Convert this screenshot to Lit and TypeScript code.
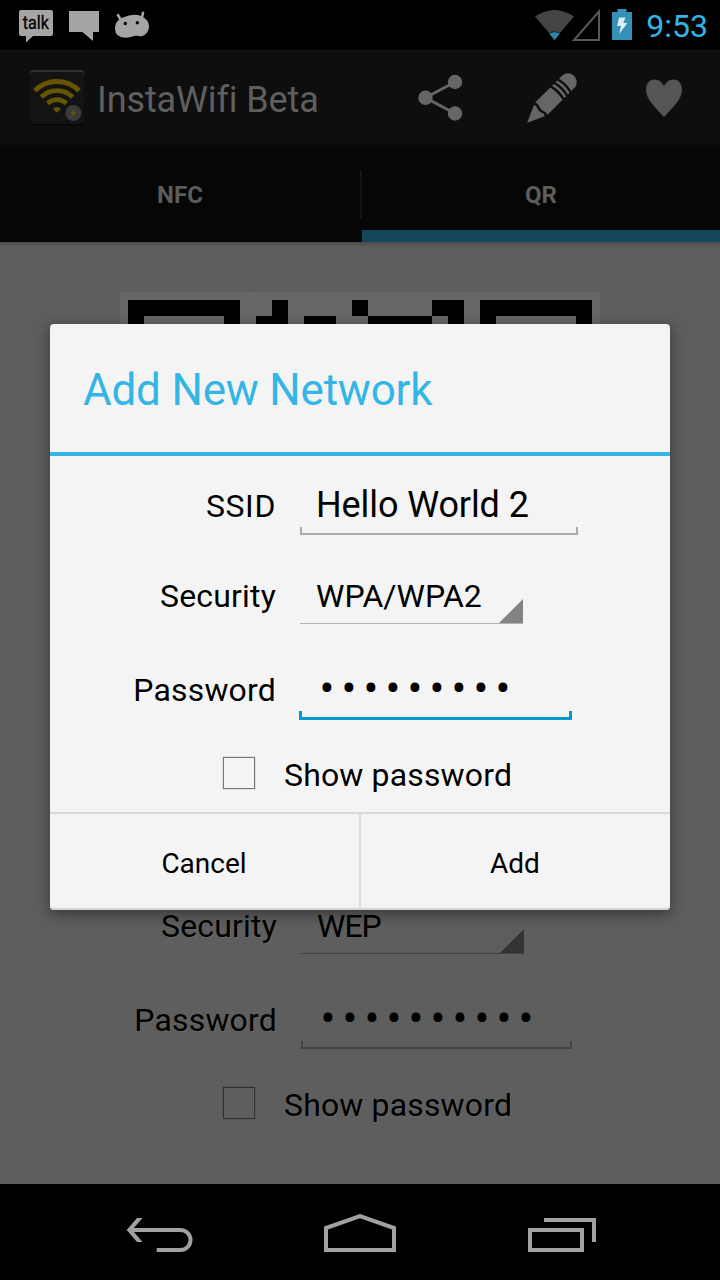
import { LitElement, html, svg, css, nothing } from "lit";
import { customElement, property } from "lit/decorators.js";
import { classMap } from "lit/directives/class-map.js";

@customElement("status-bar")
class StatusBar extends LitElement {
  static styles = css`
    :host { display: flex; height: 50px; background: #000; justify-content: space-between; }
    .clock { font-size: 32px; line-height: 52px; color: #33b5e5; padding-right: 12px; }
    .right { display: flex; }
    .talk { font: 400 17.500px Roboto, sans-serif; }
    svg { display: block; }
  `;
  render() {
    return html`
      <svg width="160" height="50" viewBox="0 0 160 50">
        <path fill="#a5a5a5" d="M21 10h30q2 0 2 2v22q0 2-2 2H33l-7 6.500v-6.500h-5q-2 0-2-2V12q0-2 2-2z"/>
        <text class="talk" x="22.800" y="29" textLength="26.200" lengthAdjust="spacingAndGlyphs" fill="#000" stroke="#000" stroke-width=".3">talk</text>
        <path fill="#a5a5a5" d="M69 11h30v21h-6v9l-10.500-9H69z"/>
        <path fill="#a5a5a5" d="M123 17.500Q133 13 141 16Q149 19.500 149 27Q148.500 34.500 141 36.500Q136 34.800 131 37Q115.500 40 115 29Q115 22 119.500 19.500z"/>
        <path d="M118 15.200l3.200 5.300M143 12.800l-1.200 5.500" stroke="#a5a5a5" stroke-width="2.600" stroke-linecap="round"/>
        <circle cx="125.300" cy="23.500" r="1.700" fill="#000"/><circle cx="137.300" cy="22.700" r="1.700" fill="#000"/>
        <path d="M129.300 28v1M133.500 28v1M129.500 31.500v1M133.500 31.500v1" stroke="#888" stroke-width=".7"/>
      </svg>
      <div class="right">
        <svg width="112" height="50" viewBox="534 0 112 50">
          <path fill="#444" d="M535 16.500Q554.500 3.500 574 16.500L559.500 33.500Q554.500 30 549.500 33.500z"/>
          <path fill="#2c87ab" stroke="#000" stroke-width=".6" d="M548.800 33.600Q554.500 30 560.200 33.600L554.500 40.600z"/>
          <path fill="none" stroke="#585858" stroke-width="2" d="M574 40H599V11.500z"/>
          <path fill="#3590b5" d="M612 12h5.500V9h9v3h5.500v28h-20z"/>
          <path fill="#dcecf3" d="M619 17.500h6.500l-2.200 5.500h4.200l-8.500 11 2-8h-3.800z"/>
        </svg>
        <span class="clock">9:53</span>
      </div>`;
  }
}

@customElement("action-bar")
class ActionBar extends LitElement {
  static styles = css`
    :host { display: flex; height: 97px; box-sizing: border-box; background: #0e0e0e; border-top: 1px solid #161616; border-bottom: 4px solid #0b0b0b; }
    .logo { padding: 19px 0 0 30px; }
    .title { flex: 1; padding-left: 13px; font-size: 36px; line-height: 99px; letter-spacing: -.12px; color: #5f5f5f; white-space: nowrap; }
    .actions { padding-top: 19px; }
    svg { display: block; }
  `;
  render() {
    return html`
      <svg class="logo" width="54" height="56" viewBox="30 70 54 56">
        <rect x="30" y="71" width="54" height="54.500" rx="3" fill="#060606"/>
        <rect x="30" y="70" width="54" height="30" rx="3" fill="#303030"/>
        <rect x="30" y="72" width="54" height="52" rx="3" fill="#131313"/>
        <g fill="none" stroke="#665600" stroke-width="4.800">
          <path d="M34.900 90.700A31.200 31.200 0 0 1 79.100 90.700"/>
          <path d="M41.300 97.100A22.200 22.200 0 0 1 72.700 97.100"/>
          <path d="M47.700 103.500A13.200 13.200 0 0 1 66.300 103.500"/>
        </g>
        <path fill="#665600" d="M53 108.800Q57 105.200 61 108.800L57 112.800z"/>
        <circle cx="73.400" cy="113" r="8" fill="#3a3a3a"/>
        <path fill="#665600" d="M75.500 107.500l-5.200 6h2.500l-1.800 5 5.300-6.500h-2.700z"/>
      </svg>
      <span class="title">InstaWifi Beta</span>
      <svg class="actions" width="304" height="56" viewBox="416 70 304 56">
        <path d="M455 82L425.500 97.800L455 113.500" fill="none" stroke="#666" stroke-width="3"/>
        <g fill="#666"><circle cx="455" cy="82" r="7.200"/><circle cx="425.500" cy="97.800" r="7.200"/><circle cx="455" cy="113.500" r="7.200"/></g>
        <g transform="translate(527.200 122.800) rotate(-45) scale(.3333)" fill="#666">
          <path d="M0 0L51-23Q57-18 52-9Q49 0 52 9Q57 18 51 23z"/>
          <path d="M60-26H124Q130 0 124 26H60Q64 16 59 9Q56 0 60-8Q65-17 60-26z"/>
          <path d="M131-26h8q7 26 0 52h-8q7-26 0-52zM146-26h8q7 26 0 52h-8q7-26 0-52z"/>
          <path d="M161-26H178Q188-24 194-16Q199-8 199 0Q199 8 194 16Q188 24 178 26H161Q168 0 161-26z"/>
        </g>
        <path fill="#555" d="M664 86.500C660.500 77 646 76.500 646 90C646 100 657 109 664 117C671 109 682 100 682 90C682 76.500 667.500 77 664 86.500z"/>
      </svg>`;
  }
}

@customElement("tab-strip")
class TabStrip extends LitElement {
  static styles = css`
    :host { display: grid; grid-template: 95px / 360px 2px 358px; height: 95px; background: #060606; font-size: 24px; font-weight: 700; color: #5c5c5c; text-align: center; line-height: 97px; }
    .divider { background: #141414; margin: 23px 0 24px; }
    .selected { box-sizing: border-box; height: 95px; border-bottom: 12px solid #14475c; }
  `;
  render() {
    return html`<span>NFC</span><span class="divider"></span><span class="selected">QR</span>`;
  }
}

@customElement("network-form")
class NetworkForm extends LitElement {
  @property() ssid = "";
  @property() security = "";
  @property({ type: Number }) dots = 0;
  @property({ type: Boolean, reflect: true }) dimmed = false;

  static styles = css`
    :host { display: block; color: #000; font-size: 32px; --line: #ababab; --under: #b4b4b4; --tri: #838383; --box: #777; --glow: #fff; }
    :host([dimmed]) { --line: #434343; --under: #424242; --tri: #343434; --box: #303030; --glow: #686868; }
    .row { display: grid; grid-template-columns: 226px 1fr; column-gap: 24px; align-items: start; }
    :host([dimmed]) .row { grid-template-columns: 227px 1fr; }
    .label { text-align: right; letter-spacing: .18px; text-shadow: 1px 1px 0 var(--glow); }
    .ssid { height: 100px; line-height: 100px; }
    .ssid .label { letter-spacing: .6px; }
    .security { height: 80px; line-height: 80px; }
    .password { height: 108px; line-height: 108px; }
    .field {
      --w: 2px; --h: 8px; --c: var(--line);
      box-sizing: border-box; padding-left: 16px; width: 278px; height: 60px; margin-top: 19px;
      font-size: 36px; line-height: 60px; letter-spacing: -.1px; white-space: nowrap;
      background:
        linear-gradient(var(--c), var(--c)) left bottom / var(--w) var(--h) no-repeat,
        linear-gradient(var(--c), var(--c)) right bottom / var(--w) var(--h) no-repeat,
        linear-gradient(var(--c), var(--c)) left bottom / 100% var(--w) no-repeat;
    }
    .secret { height: 61px; width: 271px; margin-top: 22px; font-size: 44px; line-height: 62px; letter-spacing: 0; }
    .focused { --w: 3px; --h: 9px; --c: #0099cc; height: 62px; width: 273px; margin-left: -1px; padding-left: 17px; }
    .dot { display: inline-block; width: 22px; text-align: center; }
    .spinner { box-sizing: border-box; display: flex; justify-content: space-between; align-items: flex-end; width: 223px; height: 56px; margin-top: 12px; padding-left: 16px; border-bottom: 1px solid var(--under); line-height: 54px; }
    :host([dimmed]) .spinner { letter-spacing: -1px; }
    .tri { width: 24px; height: 24px; background: var(--tri); clip-path: polygon(100% 0, 100% 100%, 0 100%); }
    .show { display: flex; height: 62px; padding-left: 173px; line-height: 62px; letter-spacing: .15px; text-shadow: 1px 1px 0 var(--glow); }
    .check { box-sizing: border-box; width: 32px; height: 32px; margin: 13px 29px 0 0; border: 1px solid var(--box); box-shadow: 0 0 1px var(--box); }
  `;
  render() {
    return html`
      ${this.ssid ? html`<div class="row ssid"><span class="label">SSID</span><div class="field">${this.ssid}</div></div>` : nothing}
      <div class="row security">
        <span class="label">Security</span>
        <div class="spinner"><span>${this.security}</span><i class="tri"></i></div>
      </div>
      <div class="row password">
        <span class="label">Password</span>
        <div class=${classMap({ field: true, secret: true, focused: !this.dimmed })}>${Array.from({ length: this.dots }, () => html`<span class="dot">•</span>`)}</div>
      </div>
      <div class="show"><i class="check"></i><span>Show password</span></div>`;
  }
}

// Dark runs of each module row: [column, row, width, height]
const MODULES = [
  [0, 0, 7, 1], [0, 1, 1, 6], [6, 1, 1, 6], [9, 0, 1, 1], [14, 0, 1, 1], [19, 0, 2, 1],
  [22, 0, 7, 1], [22, 1, 1, 6], [28, 1, 1, 6], [8, 1, 2, 1], [11, 1, 2, 1], [15, 1, 4, 1], [20, 1, 1, 1],
];

@customElement("app-root")
class AppRoot extends LitElement {
  static styles = css`
    :host { display: flex; flex-direction: column; position: relative; width: 720px; height: 1280px; overflow: hidden; background: #000; font-family: Roboto, sans-serif; }
    .content { flex: 1; box-sizing: border-box; padding: 50px 50px 0; background: linear-gradient(#4c4c4c, #5d5d5d 5px, #5e5e5e); }
    .qr { display: block; margin: 0 auto 114px; background: #666; }
    .nav { display: block; height: 96px; background: #000; }
    .dialog { position: absolute; left: 50px; top: 324px; width: 620px; height: 586px; box-sizing: border-box; border-radius: 4px; overflow: hidden; background: #f4f4f4; box-shadow: 0 4px 14px rgba(0, 0, 0, .42), inset 0 -2px 0 #d4d4d4; }
    .heading { height: 128px; padding-left: 33px; border-bottom: 4px solid #33b5e5; font-size: 44px; line-height: 132px; letter-spacing: -.2px; color: #33b5e5; }
    .buttons { display: grid; grid-template: 96px / 309px 1fr; height: 96px; margin-top: 6px; border-top: 2px solid #d9d9d9; font-size: 28px; line-height: 99px; text-align: center; letter-spacing: 0; }
    .buttons span:first-child { padding-right: 1px; }
    .add { border-left: 2px solid #dadada; padding-right: 1px; }
  `;
  render() {
    return html`
      <status-bar></status-bar>
      <action-bar></action-bar>
      <tab-strip></tab-strip>
      <div class="content">
        <svg class="qr" width="480" height="480" viewBox="-.5 -.5 30 30" shape-rendering="crispEdges">
          ${MODULES.map(([x, y, w, h]) => svg`<rect x=${x} y=${y} width=${w} height=${h}/>`)}
        </svg>
        <network-form dimmed security="WEP" dots="10"></network-form>
      </div>
      <svg class="nav" width="720" height="96" viewBox="0 1184 720 96" fill="none" stroke="#a1a1a1" stroke-width="4">
        <path d="M130 1230H180.500A10 10 0 0 1 180.500 1250H156.700"/>
        <path fill="#a1a1a1" stroke="none" d="M126.700 1230L137 1218h5.500L132.200 1230L142.500 1242H137z"/>
        <path d="M326 1250V1228L360 1216L394 1228V1250z"/>
        <path d="M530 1230h52v20h-52zM544 1220h50v22"/>
      </svg>
      <div class="dialog">
        <div class="heading">Add New Network</div>
        <network-form ssid="Hello World 2" security="WPA/WPA2" dots="9"></network-form>
        <div class="buttons"><span>Cancel</span><span class="add">Add</span></div>
      </div>`;
  }
}
